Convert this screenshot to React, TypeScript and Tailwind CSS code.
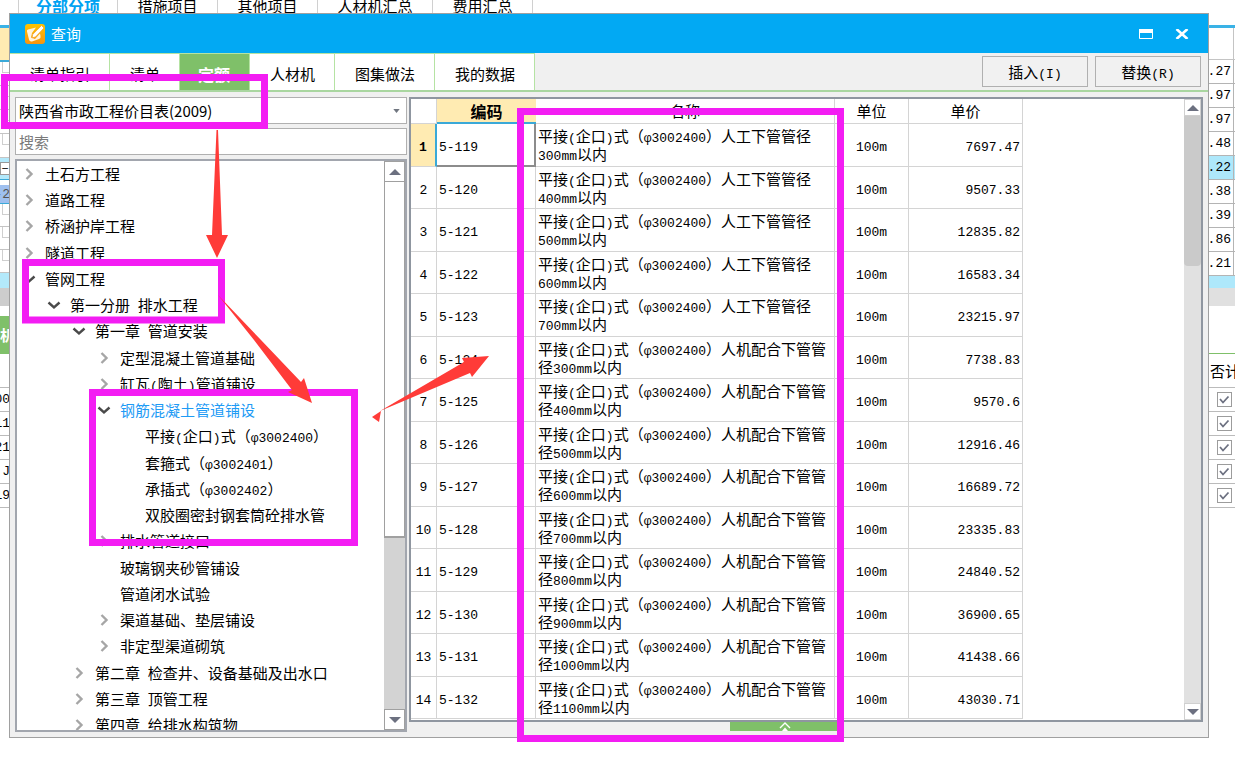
import type { ReactNode } from "react";

/* Latin runs use a narrow monospace face beside the full-width Chinese glyphs. */
function T({ children }: { children: string }) {
  const parts = children.split(/([\x20-\x7eφ]+)/).filter(Boolean);
  return (
    <>
      {parts.map((p, i) =>
        /^[\x20-\x7eφ]+$/.test(p) ? (
          <span key={i} className="whitespace-pre font-['Liberation_Mono',monospace] text-[13px] leading-none">
            {p}
          </span>
        ) : (
          p
        ),
      )}
    </>
  );
}

const mainTabs = [
  { label: "分部分项", cls: "w-[100px] font-bold text-[#00a2f2] text-[16px]" },
  { label: "措施项目", cls: "w-[100px]" },
  { label: "其他项目", cls: "w-[100px]" },
  { label: "人材机汇总", cls: "w-[115px]" },
  { label: "费用汇总", cls: "w-[100px]" },
];

const queryTabs = ["清单指引", "清单", "定额", "人材机", "图集做法", "我的数据"];

type Node = { level: number; label: string; state?: "open" | "closed"; active?: boolean };

const tree: Node[] = [
  { level: 0, label: "土石方工程", state: "closed" },
  { level: 0, label: "道路工程", state: "closed" },
  { level: 0, label: "桥涵护岸工程", state: "closed" },
  { level: 0, label: "隧道工程", state: "closed" },
  { level: 0, label: "管网工程", state: "open" },
  { level: 1, label: "第一分册 排水工程", state: "open" },
  { level: 2, label: "第一章 管道安装", state: "open" },
  { level: 3, label: "定型混凝土管道基础", state: "closed" },
  { level: 3, label: "缸瓦(陶土)管道铺设", state: "closed" },
  { level: 3, label: "钢筋混凝土管道铺设", state: "open", active: true },
  { level: 4, label: "平接(企口)式（φ3002400）" },
  { level: 4, label: "套箍式（φ3002401）" },
  { level: 4, label: "承插式（φ3002402）" },
  { level: 4, label: "双胶圈密封钢套筒砼排水管" },
  { level: 3, label: "排水管道接口", state: "closed" },
  { level: 3, label: "玻璃钢夹砂管铺设" },
  { level: 3, label: "管道闭水试验" },
  { level: 3, label: "渠道基础、垫层铺设", state: "closed" },
  { level: 3, label: "非定型渠道砌筑", state: "closed" },
  { level: 2, label: "第二章 检查井、设备基础及出水口", state: "closed" },
  { level: 2, label: "第三章 顶管工程", state: "closed" },
  { level: 2, label: "第四章 给排水构筑物", state: "closed" },
];

const indent = ["pl-[5px]", "pl-[30px]", "pl-[55px]", "pl-[80px]", "pl-[105px]"];

const prices = [
  "7697.47", "9507.33", "12835.82", "16583.34", "23215.97", "7738.83", "9570.6",
  "12916.46", "16689.72", "23335.83", "24840.52", "36900.65", "41438.66", "43030.71",
];
const diameters = [300, 400, 500, 600, 700, 300, 400, 500, 600, 700, 800, 900, 1000, 1100];
const rows = prices.map((price, i) => ({
  code: `5-${119 + i}`,
  name: `平接(企口)式（φ3002400）${i < 5 ? "人工下管管径" : "人机配合下管管径"}${diameters[i]}mm以内`,
  price,
}));

function Chevron({ open }: { open: boolean }) {
  return (
    <svg viewBox="0 0 14 14" className="h-[14px] w-[14px]" fill="none" strokeWidth="2.4">
      {open ? (
        <path d="M1.5 4.5 7 9.5l5.5-5" stroke="#4a4a4a" />
      ) : (
        <path d="M4.500 2 9.500 7l-5 5" stroke="#a6a6a6" />
      )}
    </svg>
  );
}

function Triangle({ down = false }: { down?: boolean }) {
  return (
    <svg viewBox="0 0 12 6" className="h-[6px] w-[12px]" fill="#6c7080">
      <path d={down ? "M0 0h12L6 6z" : "M0 6h12L6 0z"} />
    </svg>
  );
}

function TitleIcon() {
  return (
    <svg viewBox="0 0 20 20" className="h-5 w-5">
      <defs>
        <linearGradient id="badge" x1="0" y1="0" x2="0" y2="1">
          <stop offset="0" stopColor="#ffc400" />
          <stop offset="1" stopColor="#f79410" />
        </linearGradient>
      </defs>
      <rect width="20" height="20" rx="3" fill="url(#badge)" />
      <path d="M11 3.500 3 5.500q-1.500.5-1 2l2 8q.5 2.500 3 2l7-2.500q2-.7 1.500-3L15 9.500l-5 5.500-4-1.500 1-4.500z" fill="#fff4de" />
      <path d="M16.500 1.500 19 4l-8.500 9-3.500.8.8-3.500z" fill="#fff" stroke="#f5a52a" strokeWidth=".8" />
    </svg>
  );
}

function LeftCell({ className, children }: { className: string; children?: ReactNode }) {
  return (
    <div className={`flex shrink-0 items-center justify-end overflow-hidden whitespace-nowrap ${className}`}>
      {children}
    </div>
  );
}

function BackdropLeft() {
  return (
    <div className="flex w-[10px] flex-col">
      <LeftCell className="h-[34px] border-b-2 border-[#3aa9d8] bg-[#ffebb2]" />
      {[0, 1, 2, 3].map((i) => (
        <LeftCell key={i} className="h-6 border-b border-[#c4c4c4] pl-[2px]">
          <span className="h-[11px] flex-1 self-start border-b border-l border-[#cfcfcf]" />
        </LeftCell>
      ))}
      <LeftCell className="h-[22px] border-b border-[#3aa9d8] bg-[#b3e9fb]">
        <span className="h-[13px] w-[10px] border border-[#999] bg-white text-center text-[12px] leading-[10px]">−</span>
      </LeftCell>
      <LeftCell className="mt-[5px] h-[19px] border-b border-[#3aa9d8] bg-[#9fc0ef] text-[#555]">
        <T>-2</T>
      </LeftCell>
      {[0, 1, 2].map((i) => (
        <LeftCell key={i} className="h-[23px] border-b border-[#c4c4c4] pl-[2px]">
          <span className="h-[11px] flex-1 self-start border-b border-l border-[#cfcfcf]" />
        </LeftCell>
      ))}
      <LeftCell className="h-[15px] bg-[#b3e9fb]" />
      <LeftCell className="h-[18px] bg-[#cdcdcd]" />
      <LeftCell className="mt-[10px] h-[38px] justify-start bg-[#7fc069] font-bold text-white">机</LeftCell>
      <LeftCell className="h-[34px] border-b border-[#bbb]" />
      {["00", "11", "21", "J", "19"].map((v) => (
        <LeftCell key={v} className="h-6 border-b border-[#bbb]">
          <T>{v}</T>
        </LeftCell>
      ))}
    </div>
  );
}

function BackdropRight() {
  return (
    <div className="flex w-[27px] flex-col">
      <div className="flex h-[32px] shrink-0 border-b border-[#c4c4c4]">
        <span className="mr-px flex-1 border-r border-[#c4c4c4]" />
      </div>
      {[".27", ".97", ".97", ".48", ".22", ".38", ".39", ".86", ".21"].map((v, i) => (
        <div key={i} className={`flex h-6 shrink-0 border-b border-[#b4b4b4] ${i === 4 ? "bg-[#aee8fb]" : ""}`}>
          <span className="mr-px flex flex-1 items-center justify-end overflow-hidden border-r border-[#b4b4b4] pr-[2px]">
            <T>{v}</T>
          </span>
        </div>
      ))}
      <div className="h-[12px] shrink-0 bg-[#aee8fb]" />
      <div className="h-[18px] shrink-0 bg-[#e0e0e0]" />
      <div className="h-[48px] shrink-0 border-b border-[#7fc069]" />
      <div className="flex h-[34px] shrink-0 items-center overflow-hidden whitespace-nowrap border-b border-[#bbb] pl-[2px]">否计</div>
      {[1, 2, 3, 4, 5].map((n) => (
        <div key={n} className="flex h-6 shrink-0 items-center justify-end border-b border-[#bbb] pr-[3px]">
          <label className="grid h-[15px] w-[15px]">
            <input
              type="checkbox"
              defaultChecked
              aria-label={`是否计价 ${n}`}
              className="peer col-start-1 row-start-1 appearance-none border border-[#9c9c9c] bg-white"
            />
            <svg viewBox="0 0 15 15" className="pointer-events-none invisible col-start-1 row-start-1 peer-checked:visible" fill="none" stroke="#6c7080" strokeWidth="1.8">
              <path d="M3 7l3 3.500 5.500-6" />
            </svg>
          </label>
        </div>
      ))}
    </div>
  );
}

function TreePane() {
  return (
    <div className="flex w-[392px] shrink-0 flex-col gap-1">
      <div className="grid h-[27px] shrink-0 items-center border border-[#b0b0b0] bg-white">
        <select aria-label="定额库" className="col-start-1 row-start-1 h-full appearance-none bg-transparent px-[3px] outline-none">
          <option>陕西省市政工程价目表(2009)</option>
        </select>
        <svg viewBox="0 0 8 5" className="pointer-events-none col-start-1 row-start-1 mr-[6px] h-1 w-[7px] justify-self-end" fill="#707680">
          <path d="M0 0h8L4 5z" />
        </svg>
      </div>
      <input
        aria-label="搜索"
        placeholder="搜索"
        className="h-[27px] shrink-0 border border-[#b0b0b0] bg-white px-[3px] outline-none placeholder:text-[#7a7a7a]"
      />
      <div className="flex min-h-0 flex-1 border-2 border-[#a2a6ae] bg-white">
        <ul className="min-w-0 flex-1 overflow-hidden">
          {tree.map((n) => (
            <li key={n.label} className="h-[26px] nth-[4n]:h-[27px]">
              <button type="button" className={`flex h-full w-full items-center whitespace-nowrap text-left ${indent[n.level]} ${n.active ? "text-[#1e9bf5]" : ""}`}>
                <span className="w-[23px] shrink-0">{n.state && <Chevron open={n.state === "open"} />}</span>
                <span>
                  <T>{n.label}</T>
                </span>
              </button>
            </li>
          ))}
        </ul>
        <div className="flex w-[21px] flex-col bg-[#d3d3d3]">
          <div className="grid h-[21px] place-items-center border border-[#a0a0a0] bg-white">
            <Triangle />
          </div>
          <div className="h-[356px] border-x border-b-2 border-[#a0a0a0] bg-white" />
          <div className="mt-auto grid h-[21px] place-items-center border border-[#a0a0a0] bg-white">
            <Triangle down />
          </div>
        </div>
      </div>
    </div>
  );
}

const cell = "border-r border-b border-[#d4d4d4] py-0";

function ResultPane() {
  return (
    <div className="flex min-w-0 flex-1 flex-col">
      <div className="flex min-h-0 flex-1 border-2 border-[#8f96a0] bg-white">
        <div className="min-w-0 flex-1 overflow-hidden">
          <table className="w-[612px] table-fixed border-separate border-spacing-0">
            <colgroup>
              <col className="w-[26px]" />
              <col className="w-[99px]" />
              <col className="w-[299px]" />
              <col className="w-[74px]" />
              <col className="w-[114px]" />
            </colgroup>
            <thead>
              <tr className="h-[25px] leading-[18px]">
                <td className={cell} />
                <th className="border-b-2 border-[#3aa9d8] bg-[#ffebb2] p-0 text-[16px] font-bold">编码</th>
                <th className={`${cell} font-normal`}>名称</th>
                <th className={`${cell} font-normal`}>单位</th>
                <th className={`${cell} font-normal`}>单价</th>
              </tr>
            </thead>
            <tbody>
              {rows.map((r, i) => (
                <tr key={r.code} className="h-[42px] leading-[18px] odd:h-[43px]">
                  <td className={i === 0 ? "border-r-2 border-b border-[#3aa9d8] border-b-[#d4d4d4] bg-[#ffebb2] p-0 text-center font-bold" : `${cell} px-0 text-center`}>
                    <T>{String(i + 1)}</T>
                  </td>
                  <td className={i === 0 ? "border-r-2 border-b-2 border-[#8c8c8c] py-0 pl-[2px]" : `${cell} pl-[2px]`}>
                    <T>{r.code}</T>
                  </td>
                  <td className={`${cell} px-[2px]`}>
                    <T>{r.name}</T>
                  </td>
                  <td className={`${cell} text-center`}>
                    <T>100m</T>
                  </td>
                  <td className={`${cell} pr-[2px] text-right`}>
                    <T>{r.price}</T>
                  </td>
                </tr>
              ))}
            </tbody>
          </table>
        </div>
        <div className="flex w-[17px] flex-col bg-[#e1e1e1]">
          <div className="grid h-[17px] place-items-center border border-[#d0d0d0] bg-white">
            <Triangle />
          </div>
          <div className="h-[150px] rounded-b-sm bg-[#cacaca]" />
          <div className="mt-auto grid h-[17px] place-items-center border border-[#d0d0d0] bg-white">
            <Triangle down />
          </div>
        </div>
      </div>
      <button type="button" aria-label="展开" className="mr-[42px] mb-px grid h-[9px] w-[110px] place-items-center self-center bg-[#7fc069]">
        <svg viewBox="0 0 12 9" className="h-[9px] w-3" fill="none" stroke="#fff" strokeWidth="1.4">
          <path d="M1 6l5-5 5 5" />
          <path d="M3 9l3-3.500L9 9z" fill="#fff" stroke="none" />
        </svg>
      </button>
    </div>
  );
}

function QueryDialog() {
  return (
    <section
      role="dialog"
      aria-label="查询"
      className="absolute top-[13px] right-[26px] bottom-[22px] left-[9px] flex flex-col border border-[#a0a0a0] bg-[#f0f0f0]"
    >
      <header className="flex h-[39px] shrink-0 items-center bg-[#02a9f3] pr-[19px] pl-[15px] text-white">
        <TitleIcon />
        <h1 className="ml-[6px] flex-1">查询</h1>
        <button type="button" aria-label="最大化" className="mr-[22px]">
          <svg viewBox="0 0 14 10" className="h-[10px] w-[14px]" fill="none" stroke="#fff">
            <path d="M.5.500h13v9H.500z" />
            <path d="M0 2h14" strokeWidth="4" />
          </svg>
        </button>
        <button type="button" aria-label="关闭">
          <svg viewBox="0 0 14 10" className="h-[10px] w-[14px]" fill="none" stroke="#fff" strokeWidth="2.6">
            <path d="M1.500 0 12.500 10M12.500 0 1.500 10" />
          </svg>
        </button>
      </header>
      <nav className="flex h-[39px] shrink-0 border-b-2 border-[#a9d6a0]">
        {queryTabs.map((t) => (
          <button
            key={t}
            type="button"
            className={`border-t border-r border-[#b5e3a3] pt-1 pr-[19px] ${t === "定额" ? "bg-[#7fc069] pl-[18px] text-[16px] font-bold text-white" : "bg-white pl-5"}`}
          >
            {t}
          </button>
        ))}
        <div className="ml-auto flex items-center gap-[7px] pr-[7px]">
          {["插入(I)", "替换(R)"].map((t) => (
            <button key={t} type="button" className="h-[31px] w-[106px] border border-[#b0b0b0] bg-[#f1f1f1]">
              <T>{t}</T>
            </button>
          ))}
        </div>
      </nav>
      <div className="flex min-h-0 flex-1 gap-[2px] px-[5px] pt-[5px] pb-[5px]">
        <TreePane />
        <ResultPane />
      </div>
    </section>
  );
}

function Annotations() {
  return (
    <svg viewBox="0 0 1235 760" className="pointer-events-none absolute top-0 left-0 h-[760px] w-[1235px]">
      <g fill="none" stroke="#f31df3" strokeWidth="7">
        <rect x="4.500" y="77.500" width="260" height="48" />
        <rect x="25.500" y="262.500" width="196" height="57.500" />
        <rect x="92.500" y="392.500" width="262" height="150" />
        <rect x="520.500" y="111.500" width="320" height="627" />
      </g>
      <g fill="#ff3b38">
        <path d="M216.500 130h1.500L222 235h6L217 258 206 235h6z" />
        <path d="M218 295 261 340 301 382l3-4 8 25-24-11 4-2L254 340z" />
        <path d="M372 417l9-6-2 11z" />
        <path d="M380 411 464 362l-2-4 27-2-17 21-2-4z" />
      </g>
    </svg>
  );
}

export default function App() {
  return (
    <main className="relative flex h-screen flex-col overflow-hidden bg-white font-['Noto_Sans_CJK_SC',sans-serif] text-[15px] leading-[18px] text-black">
      <div className="flex h-[28px] shrink-0 border-b-[3px] border-[#3ab2e6] pl-[18px]">
        {mainTabs.map((t) => (
          <button
            key={t.label}
            type="button"
            className={`flex shrink-0 justify-center border-r border-[#d0d0d0] first:border-l ${t.cls}`}
          >
            <span className="-mt-[3px]">{t.label}</span>
          </button>
        ))}
      </div>
      <div className="flex min-h-0 flex-1 justify-between">
        <BackdropLeft />
        <BackdropRight />
      </div>
      <QueryDialog />
      <Annotations />
    </main>
  );
}
